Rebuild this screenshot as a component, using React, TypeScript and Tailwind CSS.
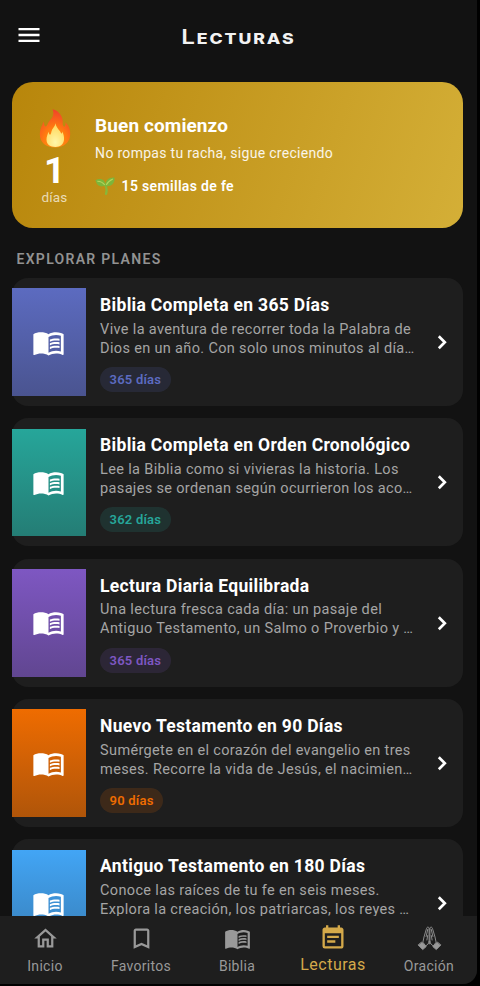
import { MdBookmarkBorder, MdEventNote, MdMenu, MdMenuBook, MdOutlineHome } from "react-icons/md"

const PLANS = [
  {
    title: "Biblia Completa en 365 Días",
    lines: ["Vive la aventura de recorrer toda la Palabra de", "Dios en un año. Con solo unos minutos al día…"],
    days: "365 días",
    cover: "from-[#5c6bc0] to-[#4a5490]",
    chip: "bg-[#5c6bc0]/15 text-[#5c6bc0]",
  },
  {
    title: "Biblia Completa en Orden Cronológico",
    lines: ["Lee la Biblia como si vivieras la historia. Los", "pasajes se ordenan según ocurrieron los aco…"],
    days: "362 días",
    cover: "from-[#26a69a] to-[#247d75]",
    chip: "bg-[#26a69a]/15 text-[#26a69a]",
  },
  {
    title: "Lectura Diaria Equilibrada",
    lines: ["Una lectura fresca cada día: un pasaje del", "Antiguo Testamento, un Salmo o Proverbio y …"],
    days: "365 días",
    cover: "from-[#7e57c2] to-[#614691]",
    chip: "bg-[#7e57c2]/15 text-[#7e57c2]",
  },
  {
    title: "Nuevo Testamento en 90 Días",
    lines: ["Sumérgete en el corazón del evangelio en tres", "meses. Recorre la vida de Jesús, el nacimien…"],
    days: "90 días",
    cover: "from-[#ef6c00] to-[#b05509]",
    chip: "bg-[#ef6c00]/15 text-[#ef6c00]",
  },
  {
    title: "Antiguo Testamento en 180 Días",
    lines: ["Conoce las raíces de tu fe en seis meses.", "Explora la creación, los patriarcas, los reyes …"],
    days: null,
    cover: "from-[#42a5f5] to-[#377cb4]",
    chip: "",
  },
]

const NAV_ITEMS = [
  { name: "Inicio", icon: MdOutlineHome },
  { name: "Favoritos", icon: MdBookmarkBorder },
  { name: "Biblia", icon: MdMenuBook },
  { name: "Lecturas", icon: MdEventNote, active: true },
  { name: "Oración", icon: PrayingHands },
]

function PrayingHands({ className }: { className?: string }) {
  return (
    <svg viewBox="-1.5 -1 27 27" className={className} fill="none" stroke="currentColor" strokeWidth="0.9" strokeLinejoin="round" strokeLinecap="round">
      <path d="M11.6 17.8 V2 C10.6 .3 9.2 1.2 8.8 3.2 L6.5 11 L5.4 16.2 L8.2 20 C10 18.5 11.6 17.5 11.6 15.5" />
      <path d="M12.4 17.8 V2 C13.4 .3 14.8 1.2 15.2 3.2 L17.5 11 L18.6 16.2 L15.8 20 C14 18.5 12.4 17.5 12.4 15.5" />
      <path d="M10.3 3.3 L8.6 10.5 M13.7 3.3 L15.4 10.5 M10.2 9.5 L9.4 14 M13.8 9.5 L14.6 14" />
      <path d="M4.4 16.3 L8.7 20.6 L5.2 23.6 L.9 19.2 Z M19.6 16.3 L15.3 20.6 L18.8 23.6 L23.1 19.2 Z" fill="currentColor" />
    </svg>
  )
}

function Flame() {
  return (
    <svg viewBox="0 0 32 40" className="h-10 w-8 shrink-0">
      <defs>
        <radialGradient id="flame" cx="0.5" cy="0.85" r="0.85">
          <stop offset="0" stopColor="#ff9d12" />
          <stop offset="0.45" stopColor="#ff7a10" />
          <stop offset="1" stopColor="#f0402a" />
        </radialGradient>
        <radialGradient id="flame-core" cx="0.5" cy="0.8" r="0.75">
          <stop offset="0" stopColor="#fff6a8" />
          <stop offset="1" stopColor="#ffd75a" />
        </radialGradient>
      </defs>
      <path
        d="M13.6 1.2 C20 2.5 24.6 9 23.7 15.6 C23.6 17.6 24.5 18.9 25.6 18.4 C27 17.6 26.4 15.5 26.4 14.3 C29.5 17.2 31.5 21.5 31.2 26.5 C30.7 34.7 25 39.4 16 39.4 C7 39.4 .8 34.5 .8 26 C.8 20.8 3.4 17 4.7 13.4 C5.2 15.2 5 18 6.5 18.4 C8.4 18.6 8.7 14.7 11.2 12.1 C14.4 8.9 15.2 5.2 13.6 1.2 Z"
        fill="url(#flame)"
      />
      <path
        d="M16.6 15.2 C17 18.8 19 20.6 21 23.2 C21.8 24.5 22 25.7 22.8 25.4 C23.3 25 23.1 24.2 23.3 23.6 C24.5 26.3 25.3 28.8 25 31.8 C24.4 36.8 21 39 16.5 39 C11.3 39 7.7 36.6 7.5 31.8 C7.4 28.5 8.8 26.3 9.5 23.8 C10 25 10 26.7 11 26.7 C12.3 26.6 12 24 13.2 21.6 C14.2 19.5 16 18.3 16.6 15.2 Z"
        fill="url(#flame-core)"
      />
    </svg>
  )
}

function Sprout() {
  return (
    <svg viewBox="0 0 20 18" className="h-[18px] w-5">
      <path d="M10 7.5 C12 11 11.9 14 11 16.8" fill="none" stroke="#86b83a" strokeWidth="2.3" strokeLinecap="round" />
      <path d="M.4 3.2 C5 .8 10 1.8 10.6 8.6 C5.2 10.6 2 8.8 .4 3.2 Z" fill="#7db53a" />
      <path d="M19.5 .6 C20 6.7 16.2 10.2 10.5 9 C10 3.6 13.6 .2 19.5 .6 Z" fill="#7db53a" />
      <path d="M2.3 4.2 C5.2 4.2 7.8 5.3 9.7 7.8 M17.8 2 C14.8 3.4 12.5 5.4 11.3 7.9" fill="none" stroke="#b4d65d" strokeWidth="1.1" />
    </svg>
  )
}

function StreakBanner() {
  return (
    <section className="flex h-[146px] shrink-0 rounded-[21px] bg-linear-[108deg] from-[#b8860b] to-[#d4af37] pl-[19px] text-white">
      <div className="flex w-12 flex-col items-center pt-[25.5px]">
        <Flame />
        <span className="mt-1 text-[37px] leading-[37px] font-bold">1</span>
        <span className="text-[13.5px] leading-[17px] tracking-[0.2px] text-white/70">días</span>
      </div>
      <div className="pt-8 pl-[16.6px]">
        <h2 className="text-[19px] leading-6 font-bold tracking-[0.1px]">Buen comienzo</h2>
        <p className="mt-1.5 text-[14px] leading-[18px] tracking-[0.3px] text-white/90">No rompas tu racha, sigue creciendo</p>
        <div className="mt-[15px] flex items-center gap-[6.5px]">
          <Sprout />
          <span className="text-[14px] leading-[18px] font-semibold tracking-[0.33px]">15 semillas de fe</span>
        </div>
      </div>
    </section>
  )
}

function PlanCard({ plan }: { plan: (typeof PLANS)[number] }) {
  return (
    <article className="flex h-32 shrink-0 items-center rounded-[16px] bg-[#1e1e1e]">
      <div className={`flex h-[107.5px] w-[74.6px] shrink-0 items-center justify-center bg-linear-to-b ${plan.cover}`}>
        <MdMenuBook className="size-[33px] text-white" />
      </div>
      <div className="flex-1 self-stretch pt-4 pl-3.5">
        <h3 className="text-[17.5px] leading-[22px] font-bold tracking-[0.3px] whitespace-nowrap text-white">{plan.title}</h3>
        <p className="mt-[3.5px] text-[14.5px] leading-[19px] tracking-[0.34px] whitespace-nowrap text-[#a5a5a5]">
          {plan.lines[0]}
          <br />
          {plan.lines[1]}
        </p>
        {plan.days && (
          <span className={`mt-[9.5px] inline-block rounded-full px-[9.5px] text-[13px] leading-[25px] font-semibold tracking-[0.2px] ${plan.chip}`}>
            {plan.days}
          </span>
        )}
      </div>
      <svg viewBox="0 0 28 28" className="mr-[7px] size-7 shrink-0" fill="none" stroke="white" strokeWidth="2.7">
        <path d="M10.8 8.2 L16.8 14.2 L10.8 20.2" />
      </svg>
    </article>
  )
}

export default function App() {
  return (
    <div className="h-[986px] w-[480px] overflow-hidden bg-black font-[Roboto,sans-serif]">
      <div className="flex h-[984px] w-[477px] flex-col overflow-hidden rounded-br-[14px] bg-[#121212]">
        <header className="grid h-[82px] shrink-0 grid-cols-[1fr_auto_1fr] items-start pt-[21px]">
          <MdMenu className="ml-[15px] size-7 text-white" />
          <h1 className="scale-x-[1.18] pt-0.5 font-[Inter,sans-serif] text-[20.5px] leading-7 font-semibold tracking-[1.6px] text-[#f2f2f2] uppercase">
            L<span className="text-[15px] font-extrabold">ecturas</span>
          </h1>
        </header>

        <main className="flex min-h-0 flex-1 flex-col overflow-hidden pr-[14px] pl-[11.5px]">
          <StreakBanner />
          <h2 className="mt-[22px] mb-[10.2px] pl-[5px] text-[14px] leading-[18px] font-semibold tracking-[1.3px] text-[#929292]">
            EXPLORAR PLANES
          </h2>
          <div className="flex flex-col gap-[12.3px]">
            {PLANS.map((plan) => (
              <PlanCard key={plan.title} plan={plan} />
            ))}
          </div>
        </main>

        <nav className="flex h-[68px] shrink-0 bg-[#1e1e1e]">
          {NAV_ITEMS.map(({ name, icon: Icon, active }) => (
            <div
              key={name}
              className={`flex w-24 shrink-0 flex-col items-center first:-ml-[3px] ${active ? "pt-[7.5px] text-[#d4a94a]" : "pt-[9px] text-[#999999]"}`}
            >
              <Icon className={active ? "size-7" : "size-[27px]"} />
              <span className={active ? "mt-[3.5px] text-[16px] leading-5 tracking-[0.5px]" : "mt-1 text-[14px] leading-5 tracking-[0.3px]"}>
                {name}
              </span>
            </div>
          ))}
        </nav>
      </div>
    </div>
  )
}
